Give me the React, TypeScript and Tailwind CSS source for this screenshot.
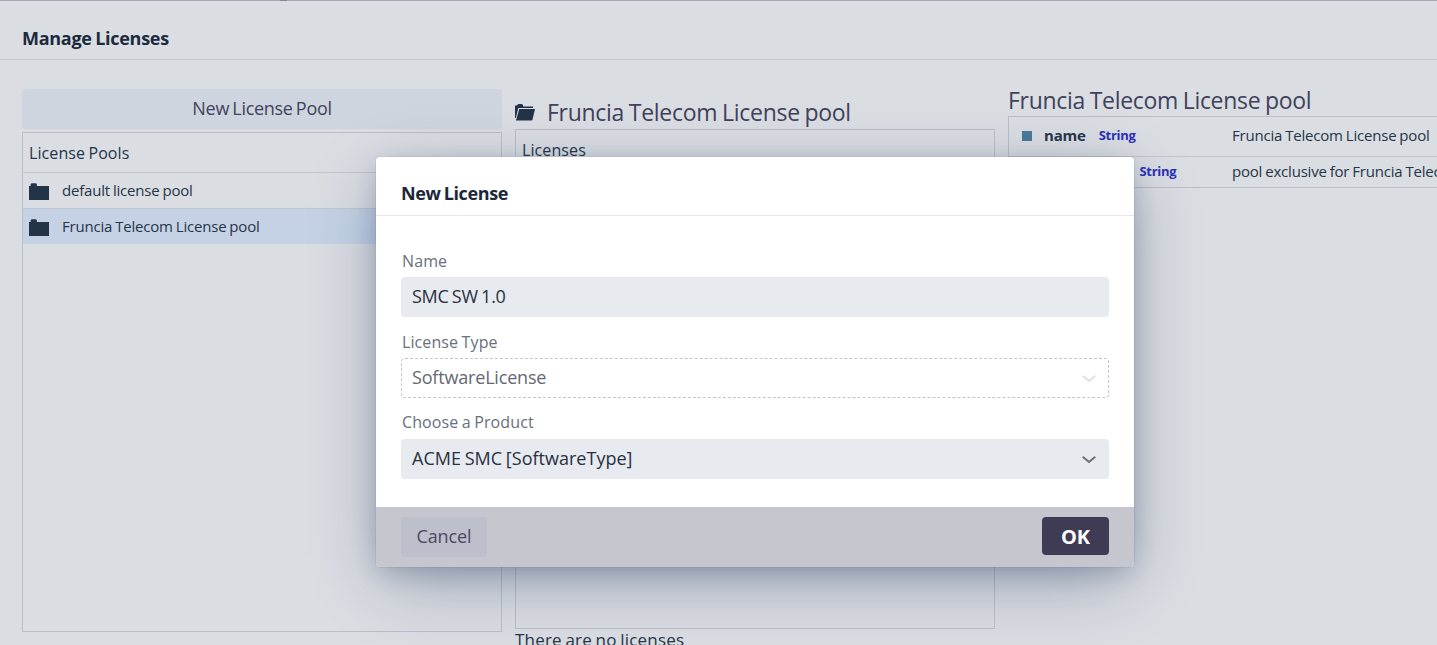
import React from "react";

function Folder() {
  return (
    <svg viewBox="0 0 20 17" className="h-[17px] w-5 shrink-0 fill-[#233348]">
      <path d="M0 17V3h1.600V1.500Q2 .3 3 .3h3.500Q7.500.3 7.900 1.500V3H20v14z" />
    </svg>
  );
}

function FolderOpen() {
  return (
    <svg viewBox="0 0 20 17" className="h-[17px] w-5 shrink-0 fill-[#233348]">
      <path d="M0 14V1.500h2L2.600.5Q3 0 3.600 0H6.600q.7 0 1 .5l.8 2H18V4H3.300L.8 14z" />
      <path d="M4.200 5H20l-2.400 10.300q-.3 1.200-1.300 1.200H1z" />
    </svg>
  );
}

function Chevron({ className }: { className: string }) {
  return (
    <svg viewBox="0 0 14 8" className={`h-2 w-3.5 ${className}`} fill="none" strokeWidth="2" strokeLinecap="round" strokeLinejoin="round">
      <path d="M1.300 1.300 7 6.100l5.700-4.800" />
    </svg>
  );
}

function PoolRow({ name, selected }: { name: string; selected?: boolean }) {
  return (
    <div className={`flex h-9 items-center gap-[13px] border-t border-[#c0c6ce] pl-1.5 ${selected ? "bg-[#c5d2e5]" : ""}`}>
      <div className="pt-0.5"><Folder /></div>
      <span className="pb-0.5 text-[15px] leading-5 tracking-[-0.2px] [word-spacing:-0.7px]">{name}</span>
    </div>
  );
}

function PropertyRow({ name, value, className }: { name: string; value: string; className: string }) {
  return (
    <div className={`flex items-center pl-[13px] ${className}`}>
      <div className="flex w-[210px] shrink-0 items-center">
        <span className="mr-3 mt-0.5 size-2.5 bg-[#487a98]" />
        <span className="mr-[13px] text-[15px] font-bold leading-5 tracking-[-0.2px]">{name}</span>
        <span className="text-[13px] font-bold leading-5 tracking-[-0.3px] text-[#2b2fb8]">String</span>
      </div>
      <span className="text-[15px] leading-5 tracking-[-0.2px] [word-spacing:-0.7px]">{value}</span>
    </div>
  );
}

function Background() {
  return (
    <div className="flex h-[645px] flex-col overflow-hidden border-t border-[#a7a9b9]">
      <header className="flex h-[59px] shrink-0 items-center border-b border-[#c6cad1] pl-[22px] pt-4">
        <h1 className="text-[18px] font-bold leading-6 tracking-[-0.27px] text-[#1b2a3d] [word-spacing:-1px]">Manage Licenses</h1>
      </header>
      <main className="flex gap-[13px] pl-[22px] pt-[29px]">
        <section className="flex w-[480px] shrink-0 flex-col gap-[3px]">
          <button className="h-10 rounded bg-[#ced5de] pb-0.5 text-[18px] tracking-[-0.32px] text-[#40425b] [word-spacing:-1px]">New License Pool</button>
          <div className="h-[500px] border border-[#b9bfc9]">
            <div className="flex h-[39px] items-center pl-1.5 text-[16px] tracking-[0.1px] [word-spacing:-1px]">License Pools</div>
            <PoolRow name="default license pool" />
            <PoolRow name="Fruncia Telecom License pool" selected />
          </div>
        </section>
        <section className="flex w-[480px] shrink-0 flex-col">
          <div className="flex h-10 items-center gap-3 pt-1.5">
            <FolderOpen />
            <h2 className="text-[23px] leading-8 tracking-[-0.28px] text-[#40425b] [word-spacing:-1px]">Fruncia Telecom License pool</h2>
          </div>
          <div className="h-[500px] border border-[#b9bfc9]">
            <div className="flex h-[39px] items-center pl-1.5 text-[16px] tracking-[0.1px]">Licenses</div>
          </div>
          <p className="whitespace-nowrap pt-px text-[17px] leading-5 tracking-[0.2px] [word-spacing:-1px]">There are no licenses</p>
        </section>
        <section className="w-[480px] shrink-0">
          <h2 className="h-[27px] whitespace-nowrap text-[23px] leading-[22px] tracking-[-0.3px] text-[#40425b] [word-spacing:-1px]">Fruncia Telecom License pool</h2>
          <div className="h-[72px] whitespace-nowrap border border-[#b9bfc9]">
            <PropertyRow name="name" value="Fruncia Telecom License pool" className="h-[39px] pb-[3px]" />
            <PropertyRow name="description" value="pool exclusive for Fruncia Telecom" className="h-[31px] border-t border-[#c0c6ce] pb-0.5" />
          </div>
        </section>
      </main>
    </div>
  );
}

interface FieldProps {
  label: string;
  value: string;
  kind: "text" | "select" | "disabled";
  className: string;
  valueClass: string;
}

function Field({ label, value, kind, className, valueClass }: FieldProps) {
  const box =
    kind === "disabled"
      ? "border border-dashed border-[#c4c6ca] pl-[9px] pr-3 text-[#646973]"
      : "bg-[#e7eaef] pl-[11px] pr-[13px] text-[#28313f]";
  return (
    <div className={className}>
      <div className="h-[27px] pl-px text-[16px] leading-[22px] tracking-[0.1px] text-[#67707d] [word-spacing:-0.8px]">{label}</div>
      <div className={`flex h-10 items-center justify-between rounded pb-0.5 text-[18px] ${box}`}>
        <span className={valueClass}>{value}</span>
        {kind !== "text" && <Chevron className={kind === "disabled" ? "mt-[3px] stroke-[#dfe1e3]" : "mt-[3px] stroke-[#6a717a]"} />}
      </div>
    </div>
  );
}

function Dialog() {
  return (
    <div className="flex h-[410px] w-[758px] flex-col overflow-hidden rounded bg-white shadow-[0_0_0_1px_rgba(25,45,80,0.06),0_6px_24px_-3px_rgba(25,45,80,0.22),0_18px_64px_-8px_rgba(25,50,90,0.4)]">
      <header className="flex h-[59px] shrink-0 items-center border-b border-[#e5e8eb] pl-[25px] pt-3.5">
        <h2 className="text-[18px] font-bold leading-6 tracking-[-0.4px] text-[#1b2838] [word-spacing:-1px]">New License</h2>
      </header>
      <div className="h-[291px] px-[25px] pt-[34px]">
        <Field label="Name" value="SMC SW 1.0" kind="text" className="h-[81px]" valueClass="tracking-[-0.25px] [word-spacing:-1.2px]" />
        <Field label="License Type" value="SoftwareLicense" kind="disabled" className="h-20" valueClass="pl-px tracking-[-0.18px]" />
        <Field label="Choose a Product" value="ACME SMC [SoftwareType]" kind="select" className="h-[68px] [&>div:first-child]:h-7" valueClass="tracking-[0.02px] [word-spacing:-1px]" />
      </div>
      <footer className="flex h-[60px] items-start justify-between bg-[#c6c6cf] px-[25px] pt-2.5">
        <button className="h-10 w-[86px] rounded bg-[#bdbfca] pb-0.5 text-[18px] tracking-[-0.1px] text-[#4a4864]">Cancel</button>
        <button className="h-[38px] w-[67px] rounded bg-[#3f3b54] pt-px text-[20px] font-bold tracking-[-0.2px] text-white">OK</button>
      </footer>
    </div>
  );
}

export default function App() {
  return (
    <div className="relative h-[645px] w-full overflow-hidden bg-[#dadde2] font-['Open_Sans','Noto_Sans',sans-serif] text-[#263548]">
      <Background />
      <div className="absolute top-0 left-[280px] h-px w-[7px] bg-[#84869a]" />
      <div className="absolute top-[157px] left-[376px]">
        <Dialog />
      </div>
    </div>
  );
}
